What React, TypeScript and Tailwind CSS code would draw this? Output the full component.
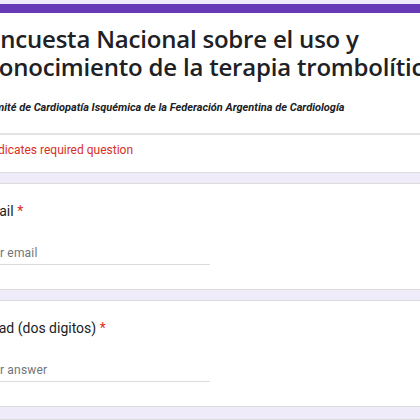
export default function App() {
  return (
    <div className="w-[420px] h-[420px] overflow-hidden bg-[#f0ebf8]" style={{ fontFamily: "Roboto, sans-serif" }}>
      <div className="w-[420px] pt-[4px]">
        <div className="h-[9px] bg-[#673ab7]" />
        <div className="bg-white border-b border-[#dadce0]">
          <div className="pt-[12px] pb-[17px]">
            <h1
              className="-ml-[13px] w-[480px] text-[24px] leading-[28px] font-semibold text-[#202124] tracking-[-0.2px]"
              style={{ fontFamily: "'Open Sans', sans-serif" }}
            >
              Encuesta Nacional sobre el uso y conocimiento de la terapia trombolítica
            </h1>
            <p className="-ml-[18px] mt-[19px] w-[460px] text-[11px] leading-[16px] font-bold italic text-[#202124]">
              Comité de Cardiopatía Isquémica de la Federación Argentina de Cardiología
            </p>
          </div>
          <div className="border-t-2 border-[#e4e4e4] pt-[7px] pb-[14px]">
            <p className="-ml-[20px] text-[12px] leading-[16px] text-[#d93025]">* Indicates required question</p>
          </div>
        </div>

        <div className="mt-[10px] bg-white border-y border-[#dadce0] pt-[17px] pb-[24px]">
          <p className="-ml-[21px] text-[14px] leading-[20px] text-[#202124]">
            Email <span className="text-[#d93025]">*</span>
          </p>
          <div className="-ml-[21px] mt-[24px] w-[231px] border-b border-[#dadce0] pb-[3px] text-[12px] leading-[16px] tracking-[0.2px] text-[#70757a]">
            Your email
          </div>
        </div>

        <div className="mt-[10px] bg-white border-y border-[#dadce0] pt-[17px] pb-[24px]">
          <p className="-ml-[17px] text-[14px] leading-[20px] text-[#202124]">
            Edad (dos digitos) <span className="text-[#d93025]">*</span>
          </p>
          <div className="-ml-[21px] mt-[24px] w-[231px] border-b border-[#dadce0] pb-[3px] text-[12px] leading-[16px] tracking-[0.2px] text-[#70757a]">
            Your answer
          </div>
        </div>

        <div className="mt-[12px] h-[40px] bg-white border-t border-[#dadce0]" />
      </div>
    </div>
  );
}
